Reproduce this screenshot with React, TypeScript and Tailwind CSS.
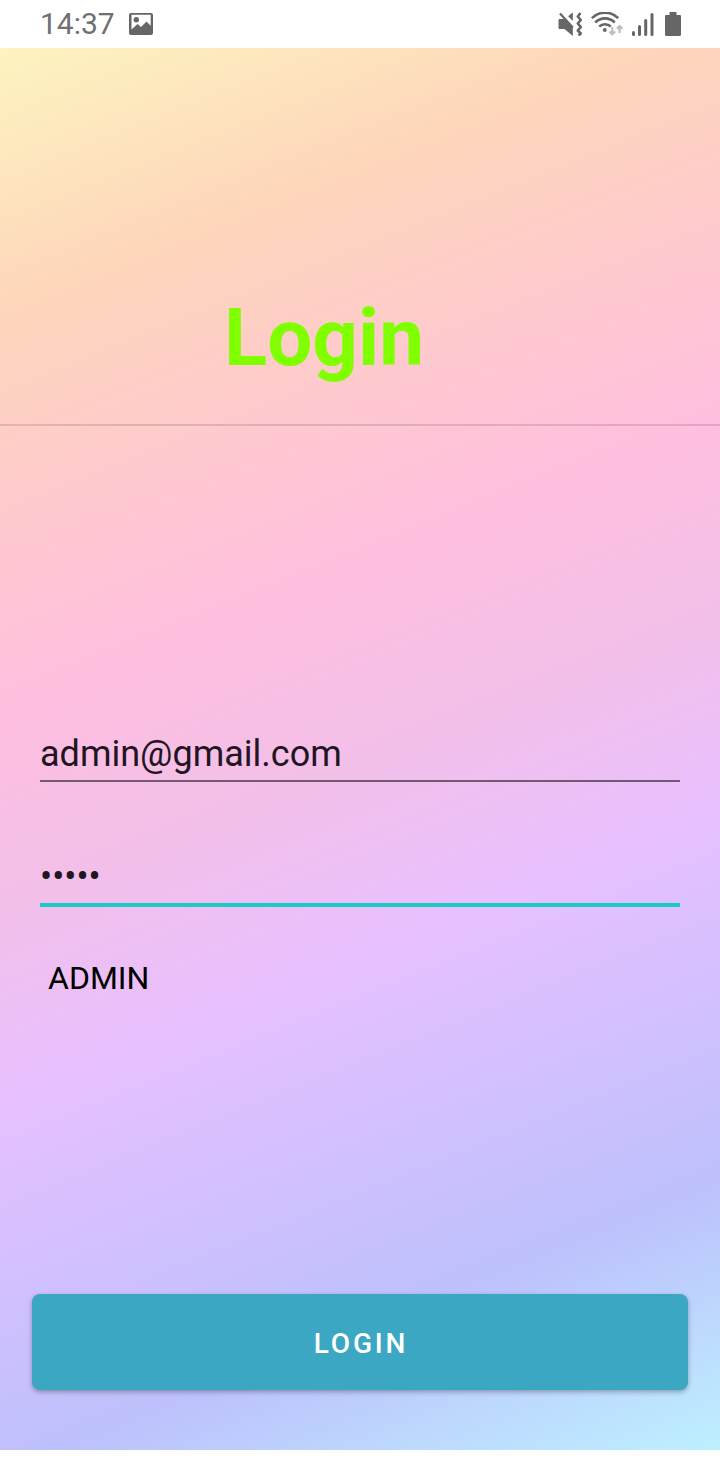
import { useState } from "react";

function PictureIcon() {
  return (
    <svg className="h-6 w-6" viewBox="0 0 24 24" fill="#666666" aria-hidden="true">
      <path
        fillRule="evenodd"
        d="M2 1h20a2 2 0 0 1 2 2v18a2 2 0 0 1-2 2H2a2 2 0 0 1-2-2V3a2 2 0 0 1 2-2Zm0.500 1.800v14.700L8.500 12l3.500 3 5.500-5.500 4.200 4.200V2.800Z"
      />
      <circle cx="7.300" cy="7.800" r="2.700" />
    </svg>
  );
}

function MutedIcon() {
  return (
    <svg className="h-6 w-6" viewBox="0 0 24 24" fill="#666666" aria-hidden="true">
      <path d="M1.500 7H6.500L14.800 15V24L6.500 17H1.500A1 1 0 0 1 0.500 16V8A1 1 0 0 1 1.500 7Z" />
      <path d="M10.200 4.300 14.800 0.300V9Z" />
      <path d="M2 1.500 14.800 15.500" stroke="#666666" strokeWidth="2.300" />
      <path
        d="M22.500 1 19.800 4.500 22.800 8 19.800 11.500 22.800 15 19.800 18.500 22.800 21.500 20.500 23.500"
        fill="none"
        stroke="#666666"
        strokeWidth="2.600"
        strokeLinejoin="round"
      />
    </svg>
  );
}

function WifiIcon() {
  return (
    <svg className="h-6 w-8" viewBox="0 0 32 24" fill="none" aria-hidden="true">
      <g stroke="#666666" strokeWidth="2.600">
        <path d="M0.800 6.200A18.500 18.500 0 0 1 27.200 6.200" />
        <path d="M4.300 10.500A13.500 13.500 0 0 1 23.700 10.500" />
        <path d="M8.200 14.500A8.500 8.500 0 0 1 19.800 14.500" />
      </g>
      <circle cx="13.800" cy="18" r="1.900" fill="#666666" />
      <g stroke="#bdbdbd" strokeWidth="2.200">
        <path d="M21.200 15V22M18.500 19.500 21.200 22.300 24 19.500" />
        <path d="M28.600 21V14.500M25.900 16.800 28.600 14 31.400 16.800" />
      </g>
    </svg>
  );
}

function SignalIcon() {
  return (
    <svg className="h-6 w-6" viewBox="0 0 24 24" fill="#666666" aria-hidden="true">
      <rect x="0" y="19" width="3" height="5" rx="1.500" />
      <rect x="6" y="13" width="3" height="11" rx="1.500" />
      <rect x="12.200" y="7" width="3" height="17" rx="1.500" />
      <rect x="18.500" y="1" width="3" height="23" rx="1.500" />
    </svg>
  );
}

function BatteryIcon() {
  return (
    <svg className="h-6 w-4" viewBox="0 0 16 24" fill="#666666" aria-hidden="true">
      <path d="M4.500 0h7v3H15a1 1 0 0 1 1 1v18.500A1.500 1.500 0 0 1 14.500 24h-13A1.500 1.500 0 0 1 0 22.500V4a1 1 0 0 1 1-1h3.500Z" />
    </svg>
  );
}

function StatusBar() {
  return (
    <div className="flex h-12 items-center justify-between bg-white pr-[39px] pl-10">
      <div className="flex items-center gap-[14px]">
        <time className="text-[30px] leading-9 text-[#707070]">14:37</time>
        <PictureIcon />
      </div>
      <div className="flex items-center gap-[9px]">
        <MutedIcon />
        <WifiIcon />
        <SignalIcon />
        <BatteryIcon />
      </div>
    </div>
  );
}

export default function App() {
  const [email, setEmail] = useState("admin@gmail.com");
  const [password, setPassword] = useState("admin");
  const [role, setRole] = useState("ADMIN");

  return (
    <div className="flex min-h-screen flex-col bg-white pb-[30px] font-['Roboto',sans-serif]">
      <StatusBar />
      <main className="flex flex-1 flex-col bg-[linear-gradient(158deg,#fdf4c0_0%,#fed5bb_16%,#ffbfdf_39%,#f2bfe9_51%,#e8c0ff_62%,#bdc0fc_84%,#bdf0ff_100%)]">
        <header className="border-b-2 border-black/12 pt-[243px] pr-[72px] pb-[39px]">
          <h1 className="text-center text-[80px] leading-[94px] font-bold text-[#80ff00]">Login</h1>
        </header>
        <form
          className="flex flex-1 flex-col px-8 pt-[300px] pb-[60px]"
          onSubmit={(event) => event.preventDefault()}
        >
          <div className="flex flex-col px-2">
            <input
              type="email"
              aria-label="Email"
              value={email}
              onChange={(event) => setEmail(event.target.value)}
              className="h-14 w-full border-b-2 border-[#755a74] bg-transparent pt-[2px] text-[36px] text-[#21151f] outline-none"
            />
            <input
              type="password"
              aria-label="Password"
              value={password}
              onChange={(event) => setPassword(event.target.value)}
              className="mt-[65px] h-[60px] w-full border-b-4 border-[#1bcbc3] bg-transparent pt-1 text-[36px] text-[#21151f] outline-none"
            />
            <select
              aria-label="Role"
              value={role}
              onChange={(event) => setRole(event.target.value)}
              className="mt-[47px] h-12 w-full appearance-none bg-transparent px-2 text-[32px] text-black outline-none"
            >
              <option>ADMIN</option>
              <option>USER</option>
            </select>
          </div>
          <button
            type="submit"
            className="mt-auto h-24 w-full rounded-lg bg-[#3ba7c3] pt-1 pl-[2px] text-[28px] font-medium tracking-widest text-white shadow-[0_2px_5px_rgba(0,0,0,0.3)]"
          >
            LOGIN
          </button>
        </form>
      </main>
    </div>
  );
}
